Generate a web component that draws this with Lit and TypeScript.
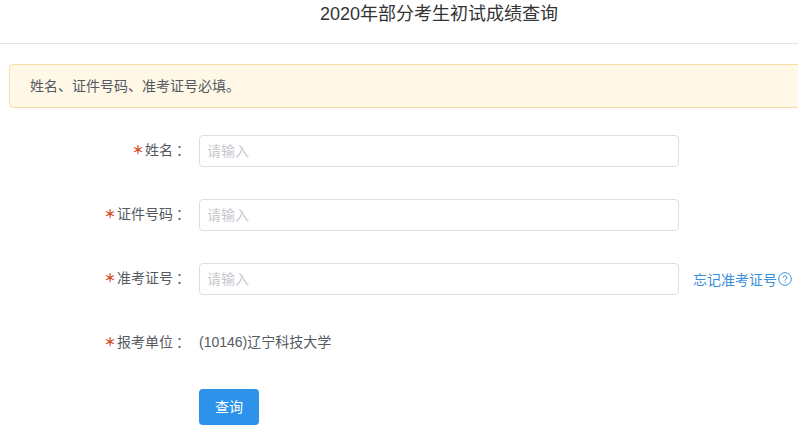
import { LitElement, html, css } from 'lit';
import { customElement } from 'lit/decorators.js';

const FIELDS = [
  { label: '姓名' },
  { label: '证件号码' },
  { label: '准考证号', help: true },
];

@customElement('app-root')
export class AppRoot extends LitElement {
  static styles = css`
    :host {
      display: block;
      width: 798px;
      height: 427px;
      overflow: hidden;
      background: #fff;
      font-family: 'Liberation Sans', 'Noto Sans CJK SC', sans-serif;
      font-size: 14px;
      color: #555a62;
    }

    .title {
      height: 44px;
      box-sizing: border-box;
      border-bottom: 1px solid #e3e3e3;
      padding-left: 320px;
      font-size: 18px;
      line-height: 28px;
      color: #333;
    }

    .notice {
      margin: 20px -10px 0 9px;
      height: 44px;
      box-sizing: border-box;
      padding-left: 20px;
      border: 1px solid #f5dfa5;
      border-radius: 4px;
      background: #fff8e6;
      line-height: 42px;
    }

    form {
      display: flex;
      flex-direction: column;
      margin-top: 27px;
    }

    .row {
      display: flex;
      align-items: center;
      height: 32px;
      margin-bottom: 32px;
    }

    .label {
      width: 199px;
      flex: none;
      box-sizing: border-box;
      padding: 0 8px 2px 0;
      text-align: right;
      line-height: 32px;
      white-space: nowrap;
    }

    .star {
      color: #cf4a22;
      font-size: 12px;
      font-weight: 700;
      margin-right: 1px;
    }

    .colon {
      margin-left: 3px;
      margin-right: 1px;
    }

    input {
      width: 480px;
      height: 32px;
      box-sizing: border-box;
      padding: 0 8px 0 7px;
      border: 1px solid #dcdee2;
      border-radius: 4px;
      outline: none;
      font: inherit;
      color: inherit;
    }

    input::placeholder {
      color: #c5c8ce;
    }

    .help {
      display: flex;
      align-items: center;
      margin-left: 14px;
      margin-top: -1px;
      color: #3a8fd9;
      white-space: nowrap;
      text-decoration: none;
    }

    .help svg {
      display: block;
      flex: none;
      margin-left: 1px;
    }

    .value {
      padding-bottom: 4px;
    }

    button {
      display: block;
      width: 60px;
      height: 36px;
      margin-left: 199px;
      margin-top: -2px;
      padding: 0 0 2px;
      border: none;
      border-radius: 4px;
      background: #2d92ea;
      color: #fff;
      font: inherit;
    }
  `;

  render() {
    return html`
      <div class="title">2020年部分考生初试成绩查询</div>
      <div class="notice">姓名、证件号码、准考证号必填。</div>
      <form>
        ${FIELDS.map(
          (f) => html`
            <div class="row">
              <label class="label"><span class="star">＊</span>${f.label}<span class="colon">：</span></label>
              <input type="text" placeholder="请输入" />
              ${f.help
                ? html`<a class="help" href="#">忘记准考证号<svg width="14" height="14" viewBox="0 0 14 14" fill="none" stroke="currentColor">
                      <circle cx="7" cy="7" r="6.3" />
                      <path d="M5.2 5.6a1.8 1.8 0 1 1 2.7 1.5c-.6.4-.9.7-.9 1.4" />
                      <path d="M7 9.8v1" />
                    </svg></a>`
                : ''}
            </div>
          `
        )}
        <div class="row">
          <span class="label"><span class="star">＊</span>报考单位<span class="colon">：</span></span>
          <span class="value">(10146)辽宁科技大学</span>
        </div>
        <button type="button">查询</button>
      </form>
    `;
  }
}
